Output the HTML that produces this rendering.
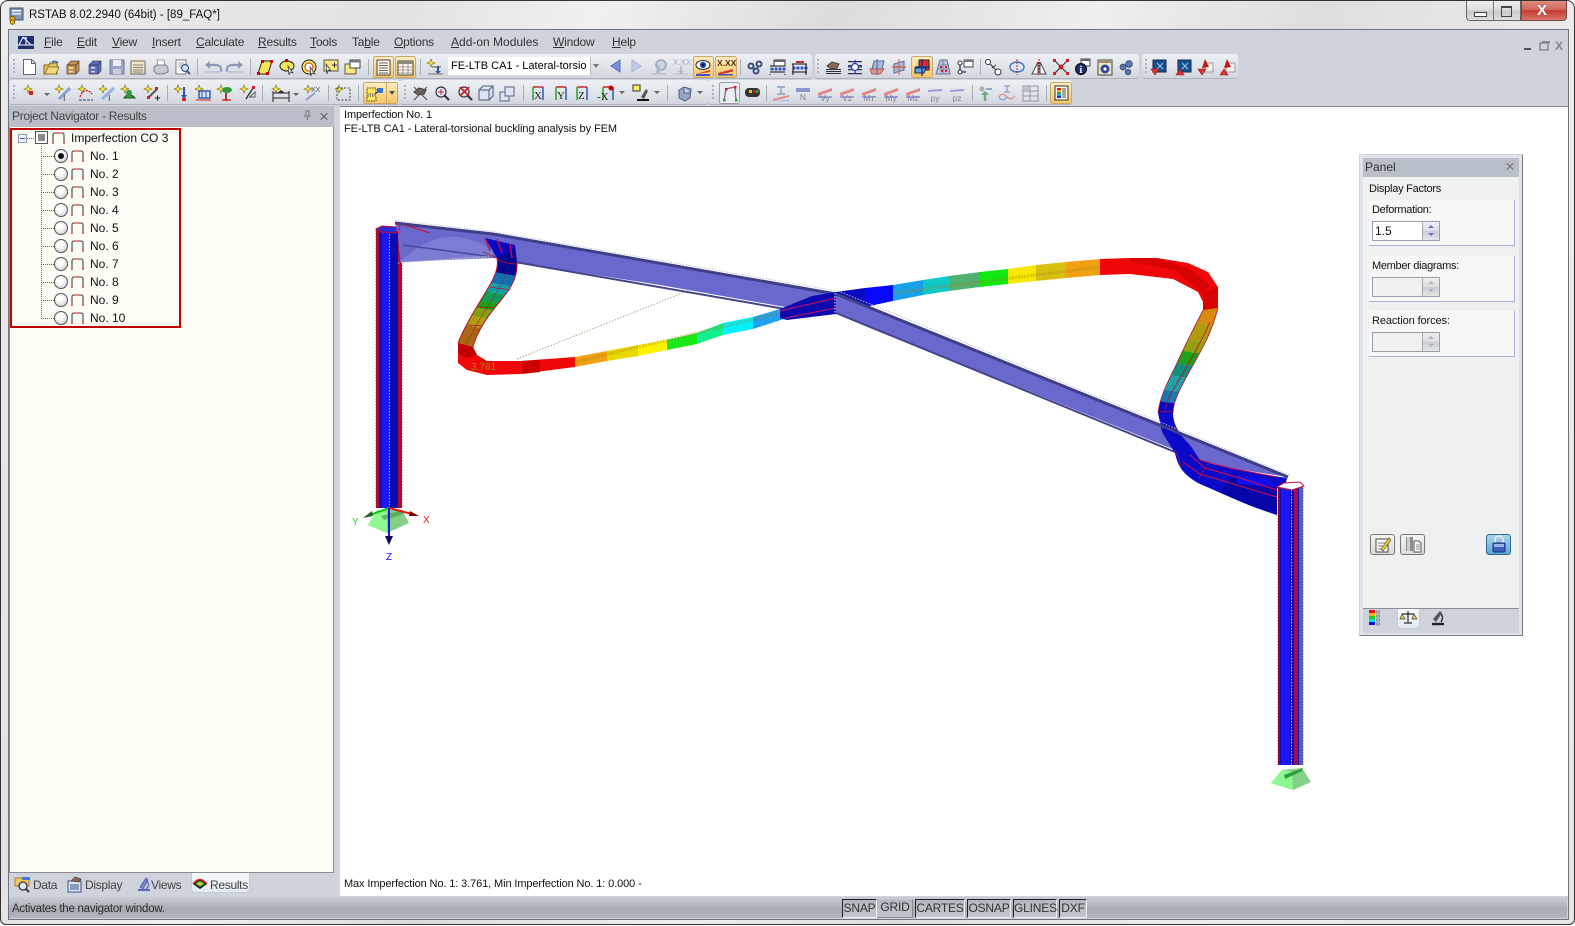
<!DOCTYPE html>
<html><head><meta charset="utf-8"><title>RSTAB</title>
<style>
html,body{margin:0;padding:0;background:#fff;width:1575px;height:926px;overflow:hidden;font-family:"Liberation Sans",sans-serif;font-size:12px;color:#222}
.a{position:absolute}
.t{position:absolute;white-space:nowrap;line-height:14px}
.m{position:absolute;top:35px;white-space:nowrap;line-height:14px;color:#333;letter-spacing:-.2px}
.tb{position:absolute;height:25px;background:linear-gradient(#eef0f4,#dfe2e8 60%,#d3d6de);border-bottom:1px solid #aeb2bb;border-radius:3px;box-sizing:border-box}
.n{position:absolute;left:90px;line-height:14px;color:#111;white-space:nowrap}
.r{position:absolute;left:54px;width:12px;height:12px;border-radius:50%;border:1px solid #555;background:radial-gradient(circle at 40% 35%,#fff 25%,#c4c6ca 95%)}
.g{position:absolute;left:1369px;width:146px;height:46px;background:#f7f7f7;border-right:1px solid #aab0e0;border-bottom:1px solid #aab0e0;box-sizing:border-box}
.i{position:absolute;left:1372px;width:68px;height:20px;border:1px solid #9a9ea6;box-sizing:border-box;background:#f1f1f1}
.sp{position:absolute;right:0;top:0;width:16px;height:18px;border-left:1px solid #aaa;background:linear-gradient(#eee,#ddd 50%,#c9cdd6 50%,#e5e5e5)}
.b{position:absolute;top:899px;height:19px;box-sizing:border-box;border:1px solid #222;border-right-color:#eee;border-bottom-color:#eee;line-height:16px;color:#333;text-align:center;font-size:12px;letter-spacing:-.2px;background:linear-gradient(#b4b8c0,#c0c4cc)}
.pb{position:absolute;top:534px;width:25px;height:21px;box-sizing:border-box;border:1px solid #777;border-radius:3px;background:linear-gradient(#f5f5f5,#dcdcdc)}
svg{position:absolute;left:0;top:0;overflow:visible}
</style></head><body>

<!-- window frame -->
<div class="a" style="left:0;top:0;width:1573px;height:923px;border:1px solid #333;border-radius:8px 8px 6px 6px;background:linear-gradient(115deg,#ececec 0%,#e2e2e2 20%,#f0f0f0 30%,#dcdcdc 42%,#eeeeee 55%,#dedede 66%,#ececec 80%,#e6e6e6 100%)"></div>
<div class="t" style="left:29px;top:8px;color:#111;font-size:11.5px">RSTAB 8.02.2940 (64bit) - [89_FAQ*]</div>
<div class="a" style="left:1466px;top:1px;width:55px;height:20px;border:1px solid #666;border-top:0;border-radius:0 0 0 4px;background:linear-gradient(#eee,#ddd 50%,#c9c9c9 50%,#dedede);box-sizing:border-box"></div>
<div class="a" style="left:1493px;top:1px;width:1px;height:20px;background:#777"></div>
<div class="a" style="left:1521px;top:1px;width:46px;height:20px;border:1px solid #7a4a4a;border-top:0;border-radius:0 0 4px 0;background:linear-gradient(#e08a80,#d0685e 45%,#c43a30 50%,#d8776a);box-sizing:border-box"></div>
<div class="a" style="left:1474px;top:12px;width:11px;height:3px;border:1px solid #444;background:#fff"></div>
<div class="a" style="left:1501px;top:6px;width:9px;height:8px;border:1px solid #444;border-top-width:2px"></div>
<div class="t" style="left:1537px;top:4px;color:#fff;font-weight:bold;font-size:15px;text-shadow:0 0 1px #433">X</div>

<!-- client -->
<div class="a" style="left:8px;top:29px;width:1559px;height:889px;background:#cfd3dc;border:1px solid #70747c"></div>

<!-- toolbars background -->
<div class="tb" style="left:9px;top:54px;width:803px"></div>
<div class="tb" style="left:815px;top:54px;width:324px"></div>
<div class="tb" style="left:1142px;top:54px;width:96px"></div>
<div class="tb" style="left:9px;top:80px;width:391px"></div>
<div class="tb" style="left:400px;top:80px;width:308px"></div>
<div class="tb" style="left:708px;top:80px;width:364px"></div>

<!-- menu -->
<div class="m" style="left:44px"><u>F</u>ile</div>
<div class="m" style="left:77px"><u>E</u>dit</div>
<div class="m" style="left:112px"><u>V</u>iew</div>
<div class="m" style="left:152px"><u>I</u>nsert</div>
<div class="m" style="left:196px"><u>C</u>alculate</div>
<div class="m" style="left:258px"><u>R</u>esults</div>
<div class="m" style="left:310px"><u>T</u>ools</div>
<div class="m" style="left:352px">Ta<u>b</u>le</div>
<div class="m" style="left:394px"><u>O</u>ptions</div>
<div class="m" style="left:451px;letter-spacing:0"><u>A</u>dd-on Modules</div>
<div class="m" style="left:553px"><u>W</u>indow</div>
<div class="m" style="left:612px"><u>H</u>elp</div>

<!-- combo -->
<div class="a" style="left:448px;top:57px;width:154px;height:18px;background:#fff"></div>
<div class="a" style="left:590px;top:57px;width:12px;height:18px;background:linear-gradient(#eceef2,#d4d7de);border-left:1px solid #bbb;box-sizing:border-box"></div>
<div class="t" style="left:451px;top:59px;color:#000;font-size:11px">FE-LTB CA1 - Lateral-torsio</div>

<!-- toolbar icons -->
<svg width="1575" height="110" viewBox="0 0 1575 110" font-family="Liberation Serif,serif">
<defs>
<linearGradient id="hl" x1="0" y1="0" x2="0" y2="1"><stop offset="0" stop-color="#fdeec8"/><stop offset=".5" stop-color="#fbd88a"/><stop offset="1" stop-color="#f6c565"/></linearGradient>
<g id="star"><path d="M4 0l1.1 2.900 2.900 1.100-2.900 1.100-1.100 2.900-1.100-2.900-2.900-1.100 2.900-1.100z" fill="#ffe43a" stroke="#7d7020" stroke-width=".6"/></g>
<g id="drw"><path d="M2 6l4-4h8v10l-3 3H2z" stroke="#444" stroke-width=".7"/><path d="M2 6h9v9M11 6l3-4" stroke="#333" fill="none" stroke-width=".7"/><rect x="4" y="8" width="4" height="1.600" fill="#ddd"/><rect x="4" y="12" width="4" height="1.400" fill="#ddd"/></g>
<g id="dia"><path d="M1 10L15 5v3L1 13z" fill="#e08888"/><path d="M1 13h14v2H1z" fill="#9aa4d8"/></g>
<g id="bar"><path d="M1 5h14v4H1z" fill="#8d94d2"/></g>
<g id="dis"><path d="M1 3l14-1v2L1 5z" fill="#9aa0dc"/></g>
<g id="axis"><path d="M3 2h10" stroke="#c33" stroke-width="1.600"/><path d="M3 2v13" stroke="#3a3" stroke-width="1.600"/><path d="M13 2v13" stroke="#36b" stroke-width="1.600"/></g>
<g id="arr"><path d="M0 0h6l-3 3z" fill="#666"/></g>
<g id="mg"><circle cx="7" cy="7" r="5" fill="#dfe8f6" stroke="#334" stroke-width="1.200"/><path d="M10 10l5 5" stroke="#334" stroke-width="2.200"/></g>
</defs>

<!-- logo -->
<rect x="18" y="36" width="16" height="13" fill="#1c2f72"/>
<path d="M18 45h16M23 37l-4 8M23 37l8 8M26 37v8M23 38h4" stroke="#fff" stroke-width="1" fill="none"/>
<!-- title icon -->
<g transform="translate(9,7)"><rect x="1" y="1" width="13" height="12" fill="#7f93b5" stroke="#3c5578"/><rect x="3" y="3" width="9" height="1.500" fill="#fff"/><rect x="3" y="6" width="9" height="1.500" fill="#e8f0fa"/><circle cx="3.500" cy="12" r="2.600" fill="#e6b820" stroke="#7a5a10"/><circle cx="3.500" cy="15" r="2.200" fill="#e6b820" stroke="#7a5a10"/></g>
<!-- mdi -->
<path d="M1524 49h7" stroke="#555" stroke-width="2"/>
<rect x="1540" y="43" width="8" height="7" fill="none" stroke="#777" stroke-width="1.200"/><rect x="1542" y="41" width="8" height="2" fill="#888"/>
<text x="1555" y="50" font-family="Liberation Sans" font-size="12" font-weight="bold" fill="#888">X</text>

<!-- grips -->
<g fill="#aeb2bb"><rect x="13" y="59" width="2" height="2"/><rect x="13" y="63" width="2" height="2"/><rect x="13" y="67" width="2" height="2"/><rect x="13" y="71" width="2" height="2"/><rect x="13" y="85" width="2" height="2"/><rect x="13" y="89" width="2" height="2"/><rect x="13" y="93" width="2" height="2"/><rect x="13" y="97" width="2" height="2"/>
<rect x="817" y="59" width="2" height="2"/><rect x="817" y="63" width="2" height="2"/><rect x="817" y="67" width="2" height="2"/><rect x="817" y="71" width="2" height="2"/>
<rect x="1145" y="59" width="2" height="2"/><rect x="1145" y="63" width="2" height="2"/><rect x="1145" y="67" width="2" height="2"/><rect x="1145" y="71" width="2" height="2"/>
<rect x="404" y="85" width="2" height="2"/><rect x="404" y="89" width="2" height="2"/><rect x="404" y="93" width="2" height="2"/><rect x="404" y="97" width="2" height="2"/>
<rect x="712" y="85" width="2" height="2"/><rect x="712" y="89" width="2" height="2"/><rect x="712" y="93" width="2" height="2"/><rect x="712" y="97" width="2" height="2"/></g>
<!-- separators -->
<path d="M197.500 59v16M250.500 59v16M368.500 59v16M420.500 59v16M740.500 59v16M980.500 59v16M167.500 85v16M262.500 85v16M328.500 85v16M358.500 85v16M523.500 85v16M667.500 85v16M766.500 85v16M972.500 85v16M1046.500 85v16" stroke="#a9adb6"/>
<!-- highlight boxes -->
<g fill="url(#hl)" stroke="#c8a868"><rect x="373.500" y="56.500" width="20" height="21" rx="2"/><rect x="395.500" y="56.500" width="20" height="21" rx="2"/><rect x="693.500" y="56.500" width="20" height="21" rx="2"/><rect x="715.500" y="56.500" width="21" height="21" rx="2"/><rect x="911.500" y="56.500" width="21" height="21" rx="2"/><rect x="363.500" y="82.500" width="34" height="21" rx="2"/><rect x="1050.500" y="82.500" width="21" height="21" rx="2"/></g>
<rect x="719.500" y="82.500" width="20" height="21" rx="2" fill="#eceef1" stroke="#9a9ea6"/>
<path d="M386.500 83v20" stroke="#c8a868"/>

<!-- ROW 1 -->
<path d="M23.500 59.500h8l4 4v11h-12z" fill="#fff" stroke="#666"/><path d="M31.500 59.500v4h4" fill="none" stroke="#666"/>
<g transform="translate(43,59)"><path d="M1 6h5l1-2h7v11H1z" fill="#e4c256" stroke="#7d6420"/><path d="M2 15l3-7h11l-3 7z" fill="#f0d880" stroke="#7d6420" stroke-width=".8"/><path d="M9 3a4 3 0 0 1 6 1" fill="none" stroke="#3c6cc0" stroke-width="1.500"/></g>
<use href="#drw" x="65" y="59" fill="#c9964a"/>
<use href="#drw" x="87" y="59" fill="#5a6fc8"/>
<g transform="translate(109,59)"><rect x="1" y="1" width="14" height="14" fill="#9aa5c2" stroke="#6a7698"/><rect x="4" y="1" width="8" height="6" fill="#e9ecf3"/><rect x="4" y="10" width="8" height="5" fill="#c9cfdc"/></g>
<g transform="translate(130,59)"><rect x="1" y="2" width="14" height="13" fill="#efe4cc" stroke="#6d6558"/><path d="M3 6h10M3 8.500h10M3 11h10M3 13h10" stroke="#8a8274"/><rect x="1" y="1" width="14" height="2" fill="#b9ac92"/></g>
<g transform="translate(153,59)"><path d="M4 1h7l1 6H5z" fill="#fff" stroke="#888" stroke-width=".8"/><path d="M1 8l3-2h9l2 3v4l-5 2H4l-3-3z" fill="#c8ccd4" stroke="#666" stroke-width=".8"/></g>
<g transform="translate(175,59)"><path d="M1 1h10v14H1z" fill="#fff" stroke="#777"/><path d="M3 4h6M3 6h6M3 8h3" stroke="#888" stroke-width=".8"/><circle cx="10" cy="9" r="3.500" fill="#cfe0f4" stroke="#3a5a8a" stroke-width="1.200"/><path d="M12 12l3 3" stroke="#3a5a8a" stroke-width="2"/></g>
<g fill="none" stroke="#8c9bb8" stroke-width="2.200"><path d="M221 72v-3a5 4 0 0 0-5-4h-9"/><path d="M227 72v-3a5 4 0 0 1 5-4h9"/></g>
<path d="M205 65l5-4v8zM243 65l-5-4v8z" fill="#8c9bb8"/>
<path d="M205 72h16M227 72h16" stroke="#b7c1d3" stroke-width="1.500"/>
<g transform="translate(257,59)"><path d="M5 2h10L11 15H1z" fill="#f7e458" stroke="#222"/><g fill="#c00"><rect x="4" y="1" width="3" height="3"/><rect x="13" y="1" width="3" height="3"/><rect x="0" y="13" width="3" height="3"/><rect x="9" y="13" width="3" height="3"/></g></g>
<g transform="translate(279,59)"><ellipse cx="8" cy="7" rx="7" ry="5" fill="#f7e458" stroke="#222"/><rect x="6" y="0" width="3" height="3" fill="#c00"/><path d="M9 7l5 7-3-1-1 3z" fill="#fff" stroke="#333" stroke-width=".7"/></g>
<g transform="translate(301,59)"><circle cx="8" cy="8" r="7" fill="#f7e458" stroke="#222"/><circle cx="8" cy="8" r="4" fill="#fff" stroke="#c33"/><path d="M9 8l5 7-3-1-1 3z" fill="#fff" stroke="#333" stroke-width=".7"/></g>
<g transform="translate(323,59)"><rect x="1" y="1" width="14" height="11" fill="#f7e67a" stroke="#555"/><path d="M9 6h5M11.500 3.500v5" stroke="#333"/><path d="M3 5l5 7-3-1-1 4z" fill="#fff" stroke="#333" stroke-width=".7"/></g>
<g transform="translate(344,59)"><rect x="1" y="5" width="11" height="10" fill="#f7e67a" stroke="#555"/><rect x="6" y="1" width="10" height="8" fill="#fff" stroke="#444"/><rect x="6" y="1" width="10" height="2.500" fill="#778"/></g>
<g transform="translate(375,59)"><rect x="2" y="1" width="13" height="15" fill="#fff7e8" stroke="#444"/><path d="M4 4h9M4 6.500h9M4 9h9M4 11.500h9M4 14h9" stroke="#666"/></g>
<g transform="translate(397,59)"><rect x="1" y="2" width="15" height="14" fill="#fff7e8" stroke="#444"/><rect x="1" y="2" width="15" height="3" fill="#8a8a7c"/><path d="M1 8h15M1 11h15M1 14h15M6 5v11M11 5v11" stroke="#888" stroke-width=".8"/></g>
<g transform="translate(427,59)"><use href="#star"/><path d="M5 8h9" stroke="#886" stroke-width="1.500"/><path d="M11 7v6" stroke="#2a55b0" stroke-width="2"/><path d="M8 12l3 3 3-3z" fill="#2a55b0"/><path d="M1 15h15" stroke="#777"/></g>
<path d="M593 64h6l-3 4z" fill="#777"/>
<path d="M620 60v12l-9-6z" fill="#7b8fd8" stroke="#5a6eb8"/>
<path d="M632 60v12l9-6z" fill="#c2cbe8" stroke="#a8b4da"/>
<g transform="translate(651,59)"><circle cx="10" cy="6" r="5" fill="#ccd4e4" stroke="#9aa6bc" stroke-width="1.500"/><path d="M7 6v8" stroke="#aab4c8" stroke-width="3"/><path d="M1 15h14" stroke="#aab4c8"/></g>
<g transform="translate(673,59)"><text x="0" y="6" font-family="Liberation Sans" font-size="8" fill="#a6acb8">X.XX</text><path d="M8 7v6" stroke="#aab4c8" stroke-width="1.500"/><path d="M5 12l3 3 3-3z" fill="#aab4c8"/><path d="M1 15h14" stroke="#b8bfcb"/></g>
<g transform="translate(695,59)"><ellipse cx="8" cy="6" rx="7" ry="4.500" fill="#fff" stroke="#222"/><circle cx="8" cy="6" r="3.200" fill="#1a5ad0"/><circle cx="8" cy="6" r="1.500" fill="#111"/><path d="M1 15l14-4v2z" fill="#d8352a"/><path d="M1 15h14v2H1z" fill="#3c55c8"/></g>
<g transform="translate(717,59)"><text x="0" y="7" font-family="Liberation Sans" font-size="8.500" font-weight="bold" fill="#503010">X.XX</text><path d="M1 14l15-4v2.500L1 16z" fill="#d8352a"/><path d="M1 15h15v1.500H1z" fill="#3c55c8"/></g>
<g transform="translate(747,60)" fill="none" stroke="#39507a" stroke-width="2"><circle cx="4" cy="6" r="2.500"/><circle cx="12" cy="4" r="2.500"/><circle cx="9" cy="11" r="2.500"/><path d="M6 7l2 3M11 6l-1 3" stroke-width="1.200"/></g>
<g transform="translate(769,59)"><rect x="5" y="1" width="11" height="6" fill="#fff" stroke="#333"/><rect x="5" y="1" width="11" height="2" fill="#667"/><g fill="#3858c0"><circle cx="3" cy="10" r="1.600"/><circle cx="7" cy="10" r="1.600"/><circle cx="11" cy="10" r="1.600"/><circle cx="15" cy="10" r="1.600"/></g><path d="M1 7h15M1 13h15M1 15v1M16 15v1" stroke="#111"/></g>
<g transform="translate(791,59)"><g fill="#3858c0"><circle cx="3" cy="9" r="1.600"/><circle cx="7" cy="9" r="1.600"/><circle cx="11" cy="9" r="1.600"/><circle cx="15" cy="9" r="1.600"/></g><path d="M1 5h15M1 13h15M2 5v11M15 5v11" stroke="#111"/><path d="M5 3h8" stroke="#c03030" stroke-width="2"/></g>
<g transform="translate(825,59)"><path d="M2 7l5-4 7 2-2 4-6 1z" fill="#8a6a5a" stroke="#443"/><g fill="#333"><rect x="1" y="12" width="15" height="1"/><rect x="1" y="14" width="15" height="1"/><rect x="1" y="10" width="15" height="1"/></g></g>
<g transform="translate(847,59)"><g fill="#334"><path d="M1 2h14v1.200H1zM1 6h14v1.200H1zM1 10h14v1.200H1zM1 14h14v1.200H1z"/></g><path d="M8 1v14M1 8h14" stroke="#2a40c0" stroke-width="1.300"/><circle cx="8" cy="8" r="3.500" fill="#fff" stroke="#2a40c0" stroke-width="1.300"/></g>
<g transform="translate(869,59)"><path d="M5 2h10l-2 8H3z" fill="#a6b9dc" stroke="#5a6e98"/><path d="M1 10h14l-4 5H3z" fill="#e09a88" stroke="#a85a4a"/><path d="M8 0v16" stroke="#4a66a8"/></g>
<g transform="translate(891,59)"><path d="M3 5l10-3v9L3 14z" fill="#a6b9dc" stroke="#5a6e98"/><path d="M1 8h14" stroke="#d06050" stroke-width="1.400"/><path d="M8 0v16" stroke="#d06050"/></g>
<g transform="translate(914,59)"><rect x="5" y="1" width="10" height="10" fill="#e02828" stroke="#222"/><path d="M1 9h11l-2 5H1z" fill="#5fa0e0" stroke="#224"/><path d="M8 0v17M1 8h15" stroke="#123a90" stroke-width="1.400"/></g>
<g transform="translate(935,59)"><path d="M5 1h7l3 14H1z" fill="#b7c4de" stroke="#6a7694"/><path d="M3 6h11M2 10h13M8 1v14" stroke="#6a7694" stroke-width=".8"/><g fill="#d02020"><rect x="5" y="7" width="2" height="2"/><rect x="10" y="7" width="2" height="2"/><rect x="6" y="11" width="2" height="2"/><rect x="10" y="11" width="2" height="2"/></g></g>
<g transform="translate(957,59)"><rect x="7" y="1" width="9" height="7" fill="#fff" stroke="#444"/><rect x="7" y="1" width="9" height="2" fill="#778"/><path d="M3 4v9h6" fill="none" stroke="#40507a" stroke-width="1.500"/><circle cx="3" cy="13" r="2" fill="#fff" stroke="#333"/><circle cx="3" cy="4" r="2" fill="#fff" stroke="#333"/></g>
<g transform="translate(985,59)"><circle cx="3" cy="3" r="2.500" fill="#fff" stroke="#333"/><circle cx="13" cy="13" r="3" fill="#fff" stroke="#333"/><path d="M5 5l6 6M7 9l4-3" stroke="#333" fill="none"/></g>
<g transform="translate(1009,59)"><ellipse cx="8" cy="8" rx="7" ry="5" fill="#d9e6f8" stroke="#4a78c0" stroke-width="1.500"/><path d="M8 0v16" stroke="#d02020" stroke-dasharray="2 1"/></g>
<g transform="translate(1031,59)"><path d="M7 3L1 15h6zM9 3l6 12H9z" fill="#fff" stroke="#444"/><path d="M8 0v16" stroke="#d02020" stroke-dasharray="2 1"/></g>
<g transform="translate(1053,59)"><path d="M2 2l12 12M14 2L2 14" stroke="#333" stroke-width="1.200"/><circle cx="8" cy="8" r="2.500" fill="#d02020"/><g fill="#d02020"><rect y="0" width="3" height="3"/><rect x="13" y="0" width="3" height="3"/><rect y="13" width="3" height="3"/><rect x="13" y="13" width="3" height="3"/></g></g>
<g transform="translate(1075,59)"><rect x="6" y="0" width="9" height="7" fill="#fff" stroke="#444"/><rect x="6" y="0" width="9" height="2" fill="#667"/><circle cx="6" cy="10" r="5.500" fill="#1a2f70" stroke="#000"/><text x="4.500" y="14" font-size="10" font-weight="bold" fill="#fff">i</text></g>
<g transform="translate(1097,59)"><rect x="1" y="1" width="14" height="15" fill="#efe4c4" stroke="#444"/><rect x="1" y="1" width="14" height="3" fill="#9a9272"/><circle cx="8" cy="10" r="4.500" fill="#2c44a0"/><circle cx="8" cy="10" r="1.600" fill="#fff"/></g>
<g transform="translate(1119,60)" fill="#5a74a8" stroke="#2c4070" stroke-width=".7"><circle cx="10" cy="4" r="3.400"/><circle cx="4" cy="7" r="3"/><circle cx="9" cy="12" r="2.800"/></g>
<g transform="translate(1150,59)"><rect x="3" y="1" width="13" height="12" fill="#18508c" stroke="#0d2c54"/><path d="M7 4l3 3 3-3M7 10l3-3 3 3" stroke="#9cc8f0" fill="none"/><path d="M1 10h8l-4 6z" fill="#e83030" stroke="#802020" stroke-width=".6"/></g>
<g transform="translate(1175,59)"><rect x="3" y="1" width="13" height="12" fill="#18508c" stroke="#0d2c54"/><path d="M7 4l3 3 3-3M7 10l3-3 3 3" stroke="#9cc8f0" fill="none"/><path d="M5 10l4 6H1z" fill="#e83030" stroke="#802020" stroke-width=".6"/></g>
<g transform="translate(1197,59)"><rect x="7" y="4" width="9" height="9" fill="#eee" stroke="#999"/><path d="M8 0l4 8-7 1z" fill="#c01818"/><path d="M1 10h8l-4 6z" fill="#e83030" stroke="#802020" stroke-width=".6"/></g>
<g transform="translate(1219,59)"><rect x="7" y="4" width="9" height="9" fill="#eee" stroke="#999"/><path d="M8 0l4 8-7 1z" fill="#c01818"/><path d="M5 10l4 6H1z" fill="#e83030" stroke="#802020" stroke-width=".6"/></g>

<!-- ROW 2 -->
<g transform="translate(24,85)"><use href="#star"/><rect x="5" y="6" width="4" height="4" fill="#d02020"/></g><use href="#arr" x="44" y="93"/>
<g transform="translate(55,85)"><use href="#star"/><path d="M4 14L15 3" stroke="#88a0d8" stroke-width="3"/><text x="8" y="16" font-family="Liberation Sans" font-size="9" fill="#445">I</text></g>
<g transform="translate(78,85)"><use href="#star"/><path d="M2 12c3-8 8-8 12-3" stroke="#d02020" stroke-dasharray="2 1" fill="none" stroke-width="1.400"/><path d="M1 15h14" stroke="#446" stroke-dasharray="3 1"/></g>
<g transform="translate(99,85)"><use href="#star"/><path d="M3 14L15 3" stroke="#9ab4e0" stroke-width="3"/><text x="9" y="16" font-family="Liberation Sans" font-size="9" fill="#445">I</text></g>
<g transform="translate(121,85)"><use href="#star"/><path d="M3 13c2-4 8-4 11 0z" fill="#2e9a3c" stroke="#1a5a20"/><circle cx="8" cy="8" r="3" fill="#2e9a3c"/></g>
<g transform="translate(144,85)"><use href="#star"/><path d="M4 13L13 4" stroke="#555" stroke-width="2"/><rect x="11" y="2" width="3" height="3" fill="#d02020"/><rect x="3" y="11" width="3" height="3" fill="#d02020"/><path d="M11 13h5M13.500 10.500v5" stroke="#222"/></g>
<g transform="translate(174,85)"><use href="#star"/><path d="M10 2v9" stroke="#2a55b0" stroke-width="2"/><path d="M7 10h6l-3 4z" fill="#2a55b0"/><rect x="8" y="13" width="4" height="3" fill="#d02020"/></g>
<g transform="translate(195,85)"><use href="#star"/><rect x="4" y="6" width="11" height="7" fill="none" stroke="#2a55b0" stroke-width="1.400"/><path d="M7 6v7M11 6v7" stroke="#2a55b0"/><path d="M1 15h15" stroke="#d02020"/></g>
<g transform="translate(217,85)"><use href="#star"/><path d="M9 8v8" stroke="#a33" stroke-width="2"/><ellipse cx="10" cy="5" rx="5" ry="3" fill="#2e9a3c"/><path d="M5 15h9" stroke="#d02020" stroke-width="1.400"/></g>
<g transform="translate(240,85)"><use href="#star"/><path d="M6 14L13 3" stroke="#333" stroke-width="1.400"/><rect x="12" y="1" width="3" height="3" fill="#d02020"/><path d="M10 12l5-5v5z" fill="#fff" stroke="#555"/></g>
<g transform="translate(272,85)"><use href="#star"/><path d="M1 8h16M1 6v11M17 6v11M1 13h16" stroke="#222" fill="none"/><path d="M5 8l4-3 4 3z" fill="#333"/></g><use href="#arr" x="293" y="93"/>
<g transform="translate(304,85)"><use href="#star"/><text x="7" y="7" font-family="Liberation Sans" font-size="7" fill="#555">XX</text><path d="M2 15l9-7" stroke="#8da0c8" stroke-width="2"/></g>
<g transform="translate(335,85)"><use href="#star"/><rect x="2" y="3" width="13" height="12" fill="none" stroke="#444" stroke-dasharray="2 1.500"/></g>
<g transform="translate(366,85)"><rect x="1" y="3" width="9" height="6" fill="#fbe55a" stroke="#444" stroke-dasharray="1.500 1"/><rect x="1" y="11" width="9" height="5" fill="#fbe55a" stroke="#444" stroke-dasharray="1.500 1"/><path d="M9 9l5-4" stroke="#222"/><rect x="11" y="3" width="6" height="5" fill="#2f7ad0"/></g>
<path d="M389 91h6l-3 4z" fill="#555"/>
<g transform="translate(412,85)"><path d="M2 7l5-4 7 2-2 4-6 1z" fill="#7c6a60" stroke="#333"/><path d="M2 2l13 13M2 15L15 2" stroke="#555" stroke-width="1.200"/></g>
<g transform="translate(434,85)"><use href="#mg"/><path d="M4 7h6M7 4v6" stroke="#c02020"/></g>
<g transform="translate(457,85)"><use href="#mg"/><path d="M3 2l9 9M12 2l-9 9" stroke="#d02020" stroke-width="1.800"/></g>
<g transform="translate(478,85)" fill="none" stroke="#6a7898" stroke-width="1.300"><rect x="1" y="5" width="10" height="10" fill="#dee4ef"/><path d="M1 5l4-4h10v10l-4 4M11 5l4-4"/></g>
<g transform="translate(499,85)"><rect x="1" y="7" width="9" height="9" fill="#dee4ef" stroke="#6a7898" stroke-width="1.200"/><rect x="6" y="2" width="9" height="9" fill="#dee4ef" stroke="#6a7898" stroke-width="1.200"/></g>
<use href="#axis" x="530" y="85"/><text x="534" y="99" font-size="11" fill="#222">X</text>
<use href="#axis" x="553" y="85"/><text x="557" y="99" font-size="11" fill="#222">Y</text>
<use href="#axis" x="574" y="85"/><text x="578" y="99" font-size="11" fill="#222">Z</text>
<use href="#axis" x="600" y="85"/><circle cx="611" cy="88" r="2.500" fill="#c00"/><text x="597" y="100" font-size="11" fill="#222">-X</text>
<use href="#arr" x="619" y="91"/>
<g transform="translate(633,85)"><rect x="0" y="0" width="7" height="6" fill="#f8ee60" stroke="#333"/><path d="M8 12l5-8 2 2-4 8z" fill="#555"/><path d="M4 15h12" stroke="#111" stroke-width="2"/></g>
<use href="#arr" x="654" y="91"/>
<g transform="translate(677,85)"><path d="M2 5l5-3 7 2-1 9-5 3-6-3z" fill="#97a6c4" stroke="#4f5e7e"/><path d="M7 2v6l6 0" fill="#d0d8e8" stroke="#4f5e7e"/></g>
<use href="#arr" x="697" y="91"/>
<g transform="translate(721,85)"><path d="M3 16l2-12 9-2 1 14" fill="none" stroke="#778" stroke-width="1.400"/><g fill="#d02020"><rect x="4" y="3" width="2.500" height="2.500"/><rect x="13" y="1" width="2.500" height="2.500"/></g><g fill="#2c9a40"><rect x="2" y="14" width="2.500" height="2.500"/><rect x="14" y="14" width="2.500" height="2.500"/></g></g>
<g transform="translate(744,87)"><rect x="1" y="1" width="15" height="9" rx="4" fill="#333"/><rect x="5" y="3" width="3" height="3" fill="#e8c020"/><rect x="9" y="3" width="2.500" height="3" fill="#d02020"/><rect x="12" y="3" width="2.500" height="3" fill="#30a040"/></g>
<g transform="translate(773,85)"><path d="M8 1v8M4 2h8M4 9h8" stroke="#8da0c8" stroke-width="1.500"/><path d="M0 14l16-4v2L0 16z" fill="#e08888"/><path d="M0 16l16-1v1z" fill="#9aa4d8"/></g>
<g font-family="Liberation Sans" font-size="8.500" fill="#7d8494" text-anchor="middle">
<use href="#bar" x="795" y="83"/><text x="803" y="100">N</text>
<use href="#dia" x="817" y="83"/><text x="825" y="101">Vy</text>
<use href="#dia" x="839" y="83"/><text x="847" y="101">Vz</text>
<use href="#dia" x="861" y="83"/><text x="869" y="101">Mт</text>
<use href="#dia" x="883" y="83"/><text x="891" y="101">My</text>
<use href="#dia" x="905" y="83"/><text x="913" y="101">Mz</text>
<use href="#dis" x="927" y="87"/><text x="935" y="101">py</text>
<use href="#dis" x="949" y="87"/><text x="957" y="101">pz</text>
</g>
<g transform="translate(977,85)"><path d="M8 7v9" stroke="#6fa878" stroke-width="2.500"/><path d="M4 10h8l-4-4z" fill="#6fa878"/><circle cx="5" cy="4" r="2.500" fill="#a8b4a8"/><path d="M9 4h6" stroke="#98a8c8" stroke-width="2"/></g>
<g transform="translate(999,85)"><path d="M8 1v6M5 1h6M5 7h6" stroke="#8da0c8" stroke-width="1.300"/><path d="M0 12c3-5 5-3 8 0s5 2 8-1" fill="none" stroke="#e08080"/><path d="M0 12c3 5 5 3 8 0" fill="none" stroke="#8090d8"/></g>
<g transform="translate(1022,85)"><rect x="1" y="1" width="15" height="15" fill="#e2e4e8" stroke="#9498a4"/><path d="M1 6h15M1 11h15M8 1v15" stroke="#9498a4"/><rect x="2" y="2" width="5" height="3" fill="#bcc0cc"/></g>
<g transform="translate(1053,85)"><rect x="2" y="1" width="13" height="14" fill="#faf5e4" stroke="#333"/><rect x="4" y="3" width="4" height="2" fill="#d02020"/><rect x="4" y="5" width="4" height="2" fill="#f0b020"/><rect x="4" y="7" width="4" height="2" fill="#30b040"/><rect x="4" y="9" width="4" height="2" fill="#20a0e0"/><rect x="4" y="11" width="4" height="2" fill="#2030c0"/><path d="M9 4h4M9 6h4M9 8h4M9 10h4M9 12h4" stroke="#555"/></g>
</svg>

<!-- viewport -->
<div class="a" style="left:340px;top:106px;width:1228px;height:790px;background:#fff;border-top:1px solid #7f828a;box-sizing:border-box"></div>
<div class="t" style="left:344px;top:108px;font-size:11px;color:#111;letter-spacing:-.1px">Imperfection No. 1</div>
<div class="t" style="left:344px;top:122px;font-size:11px;color:#111;letter-spacing:-.08px">FE-LTB CA1 - Lateral-torsional buckling analysis by FEM</div>
<div class="t" style="left:344px;top:877px;font-size:11px;color:#111;letter-spacing:-.11px">Max Imperfection No. 1: 3.761, Min Imperfection No. 1: 0.000 -</div>

<!-- 3D model -->
<svg width="1575" height="926" viewBox="0 0 1575 926">
<defs>
<clipPath id="bl"><path d="M497 258C499 268 494 278 488 288C478 305 465 325 458 343L473 347C476 335 483 322 497 305C508 292 518 280 517 262L515 250Z"/></clipPath>
<clipPath id="br"><path d="M1203 310C1198 320 1185 345 1177 363C1170 378 1160 395 1158 413L1173 413C1173 405 1176 395 1192 367C1200 352 1210 338 1218 308Z"/></clipPath>
</defs>
<!-- thin member -->
<path d="M517 359L710 282" stroke="#a8a888" stroke-dasharray="1.500 1.500" fill="none"/>
<!-- left column -->
<rect x="376" y="228" width="26" height="280" fill="#0c0cb0"/>
<rect x="376" y="228" width="3" height="280" fill="#a01038"/>
<rect x="382" y="228" width="7" height="280" fill="#1818ff"/>
<rect x="379" y="228" width="3" height="280" fill="#2a0a98"/>
<rect x="398" y="235" width="4" height="273" fill="#b00a30"/>
<path d="M389.500 228v280" stroke="#c8b8e0" stroke-dasharray="1.500 1.500"/>
<path d="M375.500 230v277M402.500 232v276" stroke="#bbb" stroke-dasharray="1.500 1.500"/>
<path d="M376 229l6-3 15 1 5 3-8 3-13-1z" fill="#2a2ad0" stroke="#c01030"/>
<!-- left beam -->
<path d="M395 222L430 226L493 233L836 293L836 313L791 308L660 285L515 262L493 258L400 262L398 235Z" fill="#6a68cc"/>
<path d="M400 262C430 232 460 230 493 250L493 258Z" fill="#8a89d8" opacity=".6"/>
<path d="M403 245L493 257" stroke="#4a4a98" stroke-width="1.500"/>
<path d="M515 262L791 310" stroke="#44448c" stroke-width="2"/>
<path d="M395 223L430 227L493 234L836 294" stroke="#3f3f88" stroke-width="3" fill="none"/>
<path d="M395 220.500L493 231.500L836 291" stroke="#c0c0c8" stroke-dasharray="1.500 1.500" fill="none"/>
<path d="M395 222l5 4-2 8" stroke="#d01028" fill="none"/><path d="M398 263L493 256" stroke="#ccc" stroke-dasharray="1.500 1.500"/>
<path d="M405 225l25 8" stroke="#d01028" fill="none"/>
<!-- ribbon left upright -->
<path d="M485 238L515 245L517 262L498 265L497 258Z" fill="#0808c0"/>
<g clip-path="url(#bl)"><g transform="rotate(10 490 300)">
<rect x="430" y="230" width="120" height="42" fill="#060690"/>
<rect x="430" y="272" width="120" height="11" fill="#1070b0"/>
<rect x="430" y="283" width="120" height="9" fill="#12a0a8"/>
<rect x="430" y="292" width="120" height="10" fill="#109a58"/>
<rect x="430" y="302" width="120" height="8" fill="#18a010"/>
<rect x="430" y="310" width="120" height="9" fill="#80a010"/>
<rect x="430" y="319" width="120" height="10" fill="#b09a10"/>
<rect x="430" y="329" width="120" height="30" fill="#a86a10"/>
</g></g>
<path d="M485 238l5 13M497 239l5 14M510 244l2 14" stroke="#d00a40" stroke-width="1.400" fill="none"/>
<path d="M497 259q8 5 20 5M490 287l20 3M478 307l17 1M468 325l14 1M483 252l15 6" stroke="#b81030" stroke-width=".8" fill="none"/>
<path d="M497 258C499 268 494 278 488 288C478 305 465 325 458 343M517 262C518 280 508 292 497 305C483 322 476 335 473 347" stroke="#c01030" stroke-width="1" fill="none"/>
<path d="M507 272C500 290 480 315 466 345" stroke="#b01030" stroke-width=".7" stroke-dasharray="2 1" fill="none"/>
<!-- ribbon left bend red -->
<path d="M458 343L473 347L477 355L487 361L520 361L575 357L575 367L520 374L487 375L467 370L458 363Z" fill="#f00808"/>
<path d="M458 343L473 347L477 355L467 358L458 354Z" fill="#c00000"/>
<path d="M522 361L540 360L540 372L522 374Z" fill="#c80000"/>
<text x="471" y="370" font-family="Liberation Sans" font-size="10" fill="#a08a10">3.761</text>
<!-- ribbon lower segments -->
<path d="M575 357L607 351L607 361L575 367Z" fill="#f0a010"/>
<path d="M607 351L638 345L638 356L607 361Z" fill="#e8d800"/>
<path d="M638 345L667 340L667 350L638 356Z" fill="#fff000"/>
<path d="M667 340L697 333L697 344L667 350Z" fill="#18e818"/>
<path d="M697 333L723 323L723 335L697 344Z" fill="#10f090"/>
<path d="M723 323L753 317L753 329L723 335Z" fill="#00f0ff"/>
<path d="M753 317L787 307L787 318L753 329Z" fill="#20a0f0"/>
<path d="M780 309L812 296L836 292L836 314L787 320L780 318Z" fill="#0a0ab0"/>
<path d="M780 311L836 298M785 318L836 308" stroke="#d01060" stroke-width="1" fill="none"/>
<path d="M836 292L865 288L865 305L836 314Z" fill="#0a0ac0"/>
<path d="M865 288L893 285L893 301L865 307Z" fill="#0808f8"/>
<path d="M893 285L923 280L923 295L893 301Z" fill="#18a0e8"/>
<path d="M923 280L949 276L949 291L923 295Z" fill="#10c8c8"/>
<path d="M949 276L980 272L980 287L949 291Z" fill="#50b070"/>
<path d="M980 272L1008 269L1008 284L980 287Z" fill="#10e810"/>
<path d="M1008 269L1036 265L1036 281L1008 284Z" fill="#f6e800"/>
<path d="M1036 265L1066 262L1066 278L1036 281Z" fill="#d8c010"/>
<path d="M1066 262L1100 259L1100 275L1066 278Z" fill="#f0a010"/>
<path d="M575 362L780 313M893 293L1100 267" stroke="#a08010" stroke-width="3" stroke-dasharray="2 1" opacity=".35" fill="none"/>
<path d="M1100 259L1130 258L1157 258L1188 263L1208 272L1218 287L1218 308L1203 312L1203 302L1198 292L1173 279L1130 274L1100 275Z" fill="#f00808"/>
<path d="M1130 258L1157 258L1188 268L1210 285L1203 293L1198 290L1175 270L1130 262Z" fill="#c40000" opacity=".55"/>
<path d="M1203 292L1218 287L1218 308L1203 312Z" fill="#d80404"/>
<!-- right upright -->
<g clip-path="url(#br)"><g transform="rotate(8 1190 360)">
<rect x="1140" y="290" width="100" height="32" fill="#d88a10"/>
<rect x="1140" y="322" width="100" height="18" fill="#b09a10"/>
<rect x="1140" y="340" width="100" height="12" fill="#90a010"/>
<rect x="1140" y="352" width="100" height="13" fill="#20a018"/>
<rect x="1140" y="365" width="100" height="13" fill="#10907a"/>
<rect x="1140" y="378" width="100" height="15" fill="#20a0a8"/>
<rect x="1140" y="393" width="100" height="12" fill="#1878b0"/>
<rect x="1140" y="405" width="100" height="20" fill="#0808c0"/>
</g></g>
<path d="M1218 308C1210 338 1200 352 1192 367C1176 395 1173 405 1173 413M1203 310C1198 320 1185 345 1177 363C1170 378 1160 395 1158 413M1210 322C1200 345 1185 370 1170 395C1167 402 1165 408 1165 413" stroke="#b81030" stroke-width=".8" fill="none"/>
<!-- right beam web -->
<path d="M836 293L1288 477L1230 468L1200 460L1188 447L1175 450L836 313Z" fill="#6a68cc"/>
<path d="M836 313L1175 452" stroke="#44448c" stroke-width="2"/>
<!-- right deformed blue -->
<path d="M1158 413L1173 413C1173 425 1180 435 1190 445L1200 460C1215 466 1250 472 1287 478L1285 487L1277 488L1277 515C1255 508 1225 495 1200 484C1185 476 1178 468 1175 453L1162 432Z" fill="#0a0ac8"/>
<path d="M1230 477L1277 488L1277 515C1255 508 1235 500 1220 492Z" fill="#0606a8"/>
<path d="M1237 475l30 4 10 8-40-3z" fill="#0e0ef0"/>
<path d="M1190 455L1205 468L1240 478L1277 490M1183 462L1200 474L1240 486L1277 497M1200 460L1230 468L1277 477" stroke="#d01050" stroke-width="1" fill="none"/>
<path d="M1205 468l-6 10M1175 450q5 10 6 17M1160 412l14-1M1162 425q8 6 14 2" stroke="#b81040" stroke-width=".8" fill="none"/>
<!-- right flange -->
<path d="M836 294L1288 477" stroke="#3f3f88" stroke-width="3"/>
<path d="M838 291L1290 475" stroke="#c0c0c8" stroke-dasharray="1.500 1.500"/>
<path d="M835 293v20" stroke="#e8e8f0" stroke-dasharray="1.500 1.500"/>
<!-- right column -->
<rect x="1278" y="487" width="25" height="278" fill="#0c0cb8"/>
<rect x="1278" y="487" width="2" height="278" fill="#8a0828"/>
<rect x="1281" y="487" width="9" height="278" fill="#1818f8"/>
<rect x="1294" y="487" width="4" height="278" fill="#a01050"/>
<rect x="1299" y="487" width="4" height="278" fill="#5a5ac0"/>
<path d="M1291.500 487v278" stroke="#c8c0e0" stroke-dasharray="1.500 1.500"/>
<path d="M1277.500 488v277M1303.500 488v277" stroke="#bbb" stroke-dasharray="1.500 1.500"/>
<path d="M1277 487l7-4 16-1 4 4-12 4z" fill="#fff" stroke="#c01030"/>
<!-- right support -->
<path d="M1271 783L1282 770L1302 768L1311 782L1293 790Z" fill="#84d088"/>
<path d="M1271 783L1282 770L1292 772L1293 790Z" fill="#90f890"/>
<path d="M1284 775L1303 768L1302 771L1285 779Z" fill="#2ca040"/>
<!-- left support + axes -->
<path d="M368 525L377 510L402 510L409 523L387 533Z" fill="#84d088"/>
<path d="M368 525L377 510L387 512L387 533Z" fill="#90f890"/>
<path d="M381 516L402 510L404 514L384 520Z" fill="#4aa050" opacity=".7"/>
<path d="M389 508L370 515" stroke="#10c810" stroke-width="2"/><path d="M363 518L372 511L373 516Z" fill="#206020"/>
<path d="M389 508L412 514" stroke="#f01010" stroke-width="2"/><path d="M419 516L410 511L409 516Z" fill="#800000"/>
<path d="M389 508V540" stroke="#1010f0" stroke-width="2"/><path d="M389 545L385 536H393Z" fill="#0a0a60"/>
<text x="352" y="525" font-family="Liberation Sans" font-size="10" fill="#10e010">Y</text>
<text x="423" y="523" font-family="Liberation Sans" font-size="10" fill="#f01010">X</text>
<text x="386" y="560" font-family="Liberation Sans" font-size="10" fill="#1010f0">Z</text>
</svg>

<!-- navigator -->
<div class="a" style="left:9px;top:106px;width:325px;height:767px;background:#fcfcf4;border:1px solid #8a8e96;box-sizing:border-box"></div>
<div class="a" style="left:9px;top:106px;width:325px;height:21px;background:#b9bec8"></div>
<div class="t" style="left:12px;top:109px;color:#444;letter-spacing:-.3px">Project Navigator - Results</div>
<div class="t" style="left:319px;top:110px;color:#666;font-size:17px">×</div>
<div class="a" style="left:10px;top:128px;width:171px;height:200px;border:2px solid #c00000;box-sizing:border-box"></div>

<svg width="340" height="340" viewBox="0 0 340 340">
<path d="M41.500 146v171" stroke="#666" stroke-dasharray="1 1"/>
<path d="M27 138.500h8M41 156.500h13M41 174.500h13M41 192.500h13M41 210.500h13M41 228.500h13M41 246.500h13M41 264.500h13M41 282.500h13M41 300.500h13M41 318.500h13" stroke="#666" stroke-dasharray="1 1"/>
<rect x="18.500" y="134.500" width="8" height="8" fill="#f4f5f8" stroke="#8a97ad"/><path d="M20 138.500h5" stroke="#2a55b0"/>
<rect x="35.500" y="131.500" width="12" height="12" fill="#fff" stroke="#555"/><rect x="38" y="134" width="7" height="7" fill="#8a8a8a"/>
<defs><g id="fr"><path d="M2 13V4Q2 2 4 2H11Q13 2 13 4V13" fill="none" stroke="#444" stroke-width="1.100"/><path d="M2 13V10M13 13V10M5 2h5" stroke="#d01010" stroke-width="1.100"/></g></defs>
<use href="#fr" x="51" y="131"/>
<use href="#fr" x="70" y="149"/><use href="#fr" x="70" y="167"/><use href="#fr" x="70" y="185"/><use href="#fr" x="70" y="203"/><use href="#fr" x="70" y="221"/><use href="#fr" x="70" y="239"/><use href="#fr" x="70" y="257"/><use href="#fr" x="70" y="275"/><use href="#fr" x="70" y="293"/><use href="#fr" x="70" y="311"/>
<path d="M306 111h3v5h-3zM304 116h7M307.500 116v4" stroke="#777" fill="none"/>
</svg>
<div class="t" style="left:71px;top:131px;color:#111">Imperfection CO 3</div>
<div class="r" style="top:149px"></div><div class="a" style="left:58px;top:153px;width:6px;height:6px;border-radius:50%;background:#111"></div>
<div class="r" style="top:167px"></div><div class="r" style="top:185px"></div><div class="r" style="top:203px"></div><div class="r" style="top:221px"></div><div class="r" style="top:239px"></div><div class="r" style="top:257px"></div><div class="r" style="top:275px"></div><div class="r" style="top:293px"></div><div class="r" style="top:311px"></div>
<div class="n" style="top:149px">No. 1</div><div class="n" style="top:167px">No. 2</div><div class="n" style="top:185px">No. 3</div><div class="n" style="top:203px">No. 4</div><div class="n" style="top:221px">No. 5</div><div class="n" style="top:239px">No. 6</div><div class="n" style="top:257px">No. 7</div><div class="n" style="top:275px">No. 8</div><div class="n" style="top:293px">No. 9</div><div class="n" style="top:311px">No. 10</div>

<!-- navigator tabs -->
<div class="a" style="left:191px;top:873px;width:59px;height:20px;background:linear-gradient(#f4f7fa,#e4ebf0);border:1px solid #c0ccd8;border-top:0;border-radius:0 0 4px 4px;box-sizing:border-box"></div>
<div class="t" style="left:33px;top:878px;color:#444;letter-spacing:-.3px">Data</div>
<div class="t" style="left:85px;top:878px;color:#444;letter-spacing:-.3px">Display</div>
<div class="t" style="left:151px;top:878px;color:#444;letter-spacing:-.3px">Views</div>
<div class="t" style="left:210px;top:878px;color:#444;letter-spacing:-.3px">Results</div>
<svg width="300" height="900" viewBox="0 0 300 900">
<g transform="translate(14,876)"><path d="M1 2h14v8H1z" fill="#f0c860" stroke="#a88030"/><rect x="8" y="1" width="8" height="3" fill="#4878c8"/><circle cx="9" cy="10" r="4" fill="#dfe8f6" stroke="#334" stroke-width="1.300"/><path d="M12 13l3 3" stroke="#334" stroke-width="2"/></g>
<g transform="translate(67,876)"><rect x="1" y="5" width="13" height="11" fill="#dde4f0" stroke="#35508a"/><path d="M3 9h9M3 11h9M3 13h9" stroke="#35508a"/><path d="M4 5l4-4 6 2-2 3z" fill="#8a6a5a" stroke="#433" stroke-width=".7"/></g>
<g transform="translate(135,876)"><path d="M3 14h12" stroke="#5a68c0" stroke-width="2"/><path d="M5 11l6-9 2 2-5 9z" fill="#7a88d0" stroke="#44509a" stroke-width=".7"/><path d="M11 13q5-4 0-9" stroke="#5a68c0" fill="none" stroke-width="1.400"/></g>
<g transform="translate(192,876)"><path d="M1 8q7-8 14 0l-7 5z" fill="#10101e"/><path d="M3 8q5-6 10 0l-5 3z" fill="#20b040"/><path d="M5 8q3-4 6 0l-3 2z" fill="#f0c020"/><path d="M1 8q7-9 14 0" stroke="#e02020" fill="none" stroke-width="1.400"/></g>
</svg>

<!-- status bar -->
<div class="a" style="left:9px;top:897px;width:1558px;height:21px;background:linear-gradient(#c8ccd3,#a8abb3 60%,#b3b6bd)"></div>
<div class="t" style="left:12px;top:902px;color:#2a2a2a;font-size:11.5px;letter-spacing:-.25px">Activates the navigator window.</div>
<div class="b" style="left:842px;width:35px">SNAP</div>
<div class="b" style="left:877px;width:36px;border-color:transparent;border-right-color:#888;border-bottom-color:#888;line-height:14px">GRID</div>
<div class="b" style="left:915px;width:50px">CARTES</div>
<div class="b" style="left:967px;width:44px">OSNAP</div>
<div class="b" style="left:1013px;width:44px">GLINES</div>
<div class="b" style="left:1059px;width:28px">DXF</div>

<!-- Panel -->
<div class="a" style="left:1359px;top:154px;width:164px;height:482px;background:#eff0f0;border:1px solid #7a7e86;border-top-color:#cfd3dc;border-left-color:#cfd3dc;box-shadow:inset 0 0 0 3px #dfe2e8;box-sizing:border-box"></div>
<div class="a" style="left:1363px;top:158px;width:156px;height:19px;background:#b9bfc8"></div>
<div class="t" style="left:1365px;top:160px;color:#333">Panel</div>
<div class="t" style="left:1505px;top:160px;color:#777;font-size:17px">×</div>
<div class="t" style="left:1369px;top:182px;color:#111;font-size:11px;letter-spacing:-.25px">Display Factors</div>

<div class="g" style="top:200px"></div><div class="t" style="left:1372px;top:203px;color:#111;font-size:11px;letter-spacing:-.3px">Deformation:</div>
<div class="i" style="top:221px;background:#fff"><div class="sp" style="background:linear-gradient(#eef0f4,#d9dce6 50%,#c6cad8 50%,#e5e7ee)"></div></div>
<div class="t" style="left:1375px;top:224px;color:#111">1.5</div>
<div class="g" style="top:256px"></div><div class="t" style="left:1372px;top:259px;color:#111;font-size:11px;letter-spacing:-.3px">Member diagrams:</div>
<div class="i" style="top:277px"><div class="sp"></div></div>
<div class="g" style="top:311px"></div><div class="t" style="left:1372px;top:314px;color:#111;font-size:11px;letter-spacing:-.1px">Reaction forces:</div>
<div class="i" style="top:332px"><div class="sp"></div></div>

<div class="pb" style="left:1370px"></div><div class="pb" style="left:1400px"></div>
<div class="pb" style="left:1486px;background:linear-gradient(#a8d4ea,#62a8d4);border-color:#2a6c90"></div>
<div class="a" style="left:1363px;top:608px;width:156px;height:25px;background:#ced3dc;border-top:1px solid #8a8e96;box-sizing:border-box"></div>
<div class="a" style="left:1397px;top:609px;width:23px;height:20px;background:linear-gradient(#f4f7fa,#e4ebf0);border:1px solid #c0ccd8;border-top:0;border-radius:0 0 4px 4px;box-sizing:border-box"></div>
<svg width="1575" height="700" viewBox="0 0 1575 700">
<path d="M1431 225l3 3h-6zM1431 236l3-3h-6z" fill="#6a72b0"/>
<path d="M1431 281l3 3h-6zM1431 292l3-3h-6zM1431 336l3 3h-6zM1431 347l3-3h-6z" fill="#b0b2b8"/>
<g transform="translate(1375,536)"><rect x="1" y="3" width="12" height="13" fill="#fff" stroke="#444"/><path d="M3 7h7M3 10h5M3 13h5" stroke="#777"/><path d="M6 13l8-11 2 2-8 11z" fill="#f0d030" stroke="#433" stroke-width=".6"/></g>
<g transform="translate(1405,536)"><rect x="1" y="1" width="7" height="14" fill="#8c8c8c"/><rect x="2" y="1" width="3" height="14" fill="#cfcfcf"/><path d="M9 5h5l2 2v9H9z" fill="#fff" stroke="#555"/><path d="M11 9h4M11 11h4M11 13h4" stroke="#888"/></g>
<g transform="translate(1491,535)"><path d="M4 9V5a4 4 0 0 1 8 0v4" fill="none" stroke="#dfeaf6" stroke-width="1.800"/><rect x="2" y="8" width="12" height="9" rx="1" fill="#3c5cc0" stroke="#18307a"/><rect x="3" y="9" width="10" height="3" fill="#9ab4ea"/></g>
<g transform="translate(1367,610)"><rect x="2" y="0" width="6" height="3" fill="#e01010"/><rect x="2" y="3" width="6" height="3" fill="#f0b010"/><rect x="2" y="6" width="6" height="3" fill="#20d020"/><rect x="2" y="9" width="6" height="3" fill="#10d8e8"/><rect x="2" y="12" width="6" height="3" fill="#1010d0"/><path d="M9.500 1h3v2h-3zM9.500 5h3v2h-3zM9.500 9h3v2h-3zM9.500 13h3v2h-3z" fill="none" stroke="#777" stroke-width=".7"/></g>
<g transform="translate(1400,610)"><path d="M8 1v11M2 4h12M4 13h8" stroke="#2a2a2a" stroke-width="1.200"/><path d="M2 4L0 9h5zM14 4l-2 5h5z" fill="#e8c860" stroke="#443" stroke-width=".7"/></g>
<g transform="translate(1429,609)"><path d="M3 15h12" stroke="#222" stroke-width="2.400"/><path d="M4 10l7-8 2 2-6 9z" fill="#555"/><path d="M12 13q3-5 0-8" stroke="#333" fill="none" stroke-width="1.400"/></g>
</svg>
</body></html>
